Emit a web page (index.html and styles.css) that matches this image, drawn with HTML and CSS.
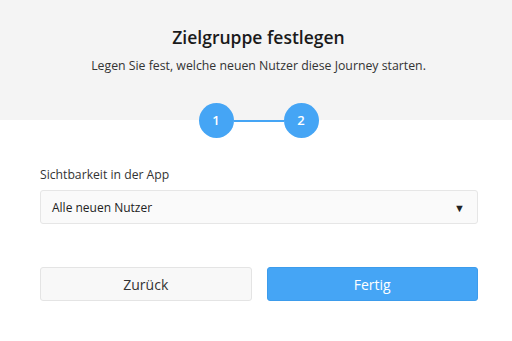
FILE: index.html
```html
<!DOCTYPE html>
<html lang="de">

<head>
    <meta charset="UTF-8">
    <meta name="viewport" content="width=device-width, initial-scale=1.0">
    <title>Zielgruppe festlegen</title>
    <link rel="stylesheet" href="styles.css">
</head>

<body>
    <div class="header">
        <h2 class="title">Zielgruppe festlegen</h2>
        <p class="subtitle">Legen Sie fest, welche neuen Nutzer diese Journey starten.</p>

        <!-- Schritte -->
        <div class="steps">
            <span class="step">1</span>
            <span class="step-line"></span>
            <span class="step">2</span>
        </div>
    </div>

    <div class="content">
        <label class="field-label">Sichtbarkeit in der App</label>
        <div class="select">
            <span>Alle neuen Nutzer</span>
            <span class="arrow">&#9660;</span>
        </div>

        <div class="buttons">
            <button class="btn btn-back">Zurück</button>
            <button class="btn btn-done">Fertig</button>
        </div>
    </div>
</body>

</html>
```

FILE: styles.css
```css
body {
    margin: 0;
    background-color: #fff;
    font-family: "Open Sans", sans-serif;
    color: #222;
}

.header {
    position: relative;
    height: 120px;
    padding-left: 5px;
    background-color: #f4f4f4;
    text-align: center;
}

.title {
    margin: 0;
    padding-top: 25px;
    font-size: 17.5px;
    font-weight: 600;
    line-height: 24px;
    color: #1a1a1a;
}

.subtitle {
    margin: 8px 0 0;
    font-size: 12.3px;
    line-height: 18px;
    color: #333;
}

/* Schritte liegen halb über dem Header-Rand */
.steps {
    position: absolute;
    left: 5px;
    right: 0;
    bottom: -18px;
    display: flex;
    justify-content: center;
    align-items: center;
}

.step {
    width: 35px;
    height: 35px;
    border-radius: 50%;
    background-color: #45a5f5;
    color: #fff;
    font-size: 13px;
    font-weight: 600;
    line-height: 35px;
    text-align: center;
}

.step-line {
    width: 50px;
    height: 2px;
    background-color: #45a5f5;
}

.content {
    padding: 47px 34px 0 40px;
}

.field-label {
    display: block;
    font-size: 12.2px;
    color: #333;
    line-height: 16px;
}

.select {
    display: flex;
    justify-content: space-between;
    align-items: center;
    margin-top: 7px;
    height: 32px;
    padding: 0 12px 0 11px;
    border: 1px solid #e6e6e6;
    border-radius: 3px;
    background-color: #fafafa;
    font-size: 12px;
    color: #222;
}

.arrow {
    font-size: 11px;
    color: #222;
}

.buttons {
    display: flex;
    gap: 15px;
    margin-top: 43px;
}

.btn {
    flex: 1;
    height: 34px;
    border-radius: 3px;
    font-family: "Open Sans", sans-serif;
    font-size: 14px;
    cursor: pointer;
}

.btn-back {
    border: 1px solid #e4e4e4;
    background-color: #f8f8f8;
    color: #333;
}

.btn-done {
    border: 1px solid #3d9cec;
    background-color: #45a5f5;
    color: #fff;
}
```
